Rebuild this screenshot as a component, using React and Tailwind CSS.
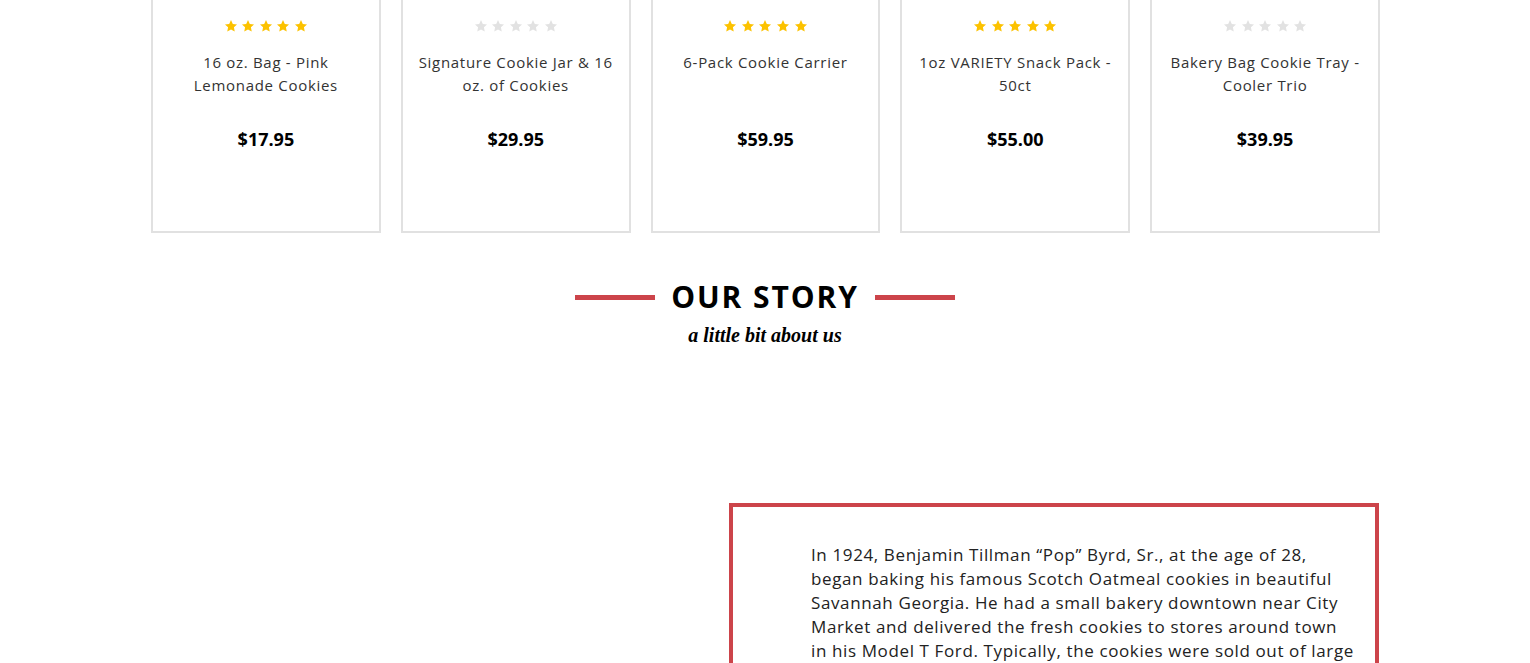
import React from "react";

const products = [
  { rating: 5, title: "16 oz. Bag - Pink Lemonade Cookies", price: "$17.95" },
  { rating: 0, title: "Signature Cookie Jar & 16 oz. of Cookies", price: "$29.95" },
  { rating: 5, title: "6-Pack Cookie Carrier", price: "$59.95" },
  { rating: 5, title: "1oz VARIETY Snack Pack - 50ct", price: "$55.00" },
  { rating: 0, title: "Bakery Bag Cookie Tray - Cooler Trio", price: "$39.95" },
];

function Star({ filled }) {
  return (
    <svg width="14" height="14" viewBox="0 0 24 24" className="block">
      <path
        d="M12 1.8l3.1 6.6 7.2.9-5.3 5 1.4 7.1L12 17.9l-6.4 3.5 1.4-7.1-5.3-5 7.2-.9z"
        fill={filled ? "#fcc200" : "#e2e2e2"}
      />
    </svg>
  );
}

function Card({ p }) {
  return (
    <div className="h-[243px] border-2 border-[#e1e1e1] bg-white flex flex-col items-center pt-[27px] px-[14px]">
      <div className="flex gap-[3.6px]">
        {[0, 1, 2, 3, 4].map((i) => (
          <Star key={i} filled={i < p.rating} />
        ))}
      </div>
      <div className="mt-[18px] h-[54px] text-center text-[15px] leading-[23px] text-[#333] tracking-[0.7px]">
        {p.title}
      </div>
      <div className="mt-[22px] text-[18px] font-bold text-black leading-[24px]">{p.price}</div>
    </div>
  );
}

export default function App() {
  return (
    <div
      className="w-[1530px] h-[663px] overflow-hidden bg-white"
      style={{ fontFamily: '"Open Sans", "Noto Sans", sans-serif' }}
    >
      <div className="w-[1230px] mx-auto mt-[-10px] grid grid-cols-5 gap-[20px] pl-[1px]">
        {products.map((p) => (
          <Card key={p.title} p={p} />
        ))}
      </div>

      <div className="mt-[46px] flex items-center justify-center gap-[16px]">
        <div className="w-[80px] h-[5px] bg-[#cc444a]" />
        <h2 className="text-[30px] font-bold text-black leading-[36px] tracking-[1.9px]">OUR STORY</h2>
        <div className="w-[80px] h-[5px] bg-[#cc444a]" />
      </div>
      <div
        className="text-center italic font-bold text-[20px] leading-[28px] text-black mt-[6px]"
        style={{ fontFamily: '"Liberation Serif", serif' }}
      >
        a little bit about us
      </div>

      <div className="w-[1230px] mx-auto mt-[154px] flex pl-[579px]">
        <div className="w-[650px] h-[220px] border-[4px] border-[#cc444a] pl-[78px] pr-[20px] pt-[36px]">
          <p className="text-[17px] leading-[24px] text-[#222] tracking-[0.62px]">
            In 1924, Benjamin Tillman “Pop” Byrd, Sr., at the age of 28, began baking his famous Scotch
            Oatmeal cookies in beautiful Savannah Georgia. He had a small bakery downtown near City
            Market and delivered the fresh cookies to stores around town in his Model T Ford. Typically,
            the cookies were sold out of large glass jars on the counters of local stores.
          </p>
        </div>
      </div>
    </div>
  );
}
